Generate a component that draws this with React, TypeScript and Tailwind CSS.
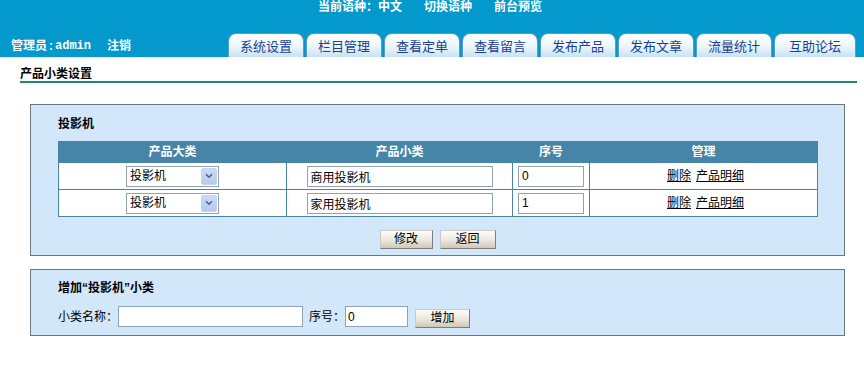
import { useState } from 'react'

const tabs = ['系统设置', '栏目管理', '查看定单', '查看留言', '发布产品', '发布文章', '流量统计', '互助论坛']

const rows = [
  { big: '投影机', small: '商用投影机', order: '0' },
  { big: '投影机', small: '家用投影机', order: '1' },
]

const Btn = ({ label, w }: { label: string; w: string }) => (
  <button
    className={`${w} h-[19px] text-[12px] leading-[17px] text-black border border-[#7d7d7d] border-t-[#c9c9c9] border-l-[#c9c9c9] bg-linear-to-b from-[#fdfdfb] via-[#ece9e0] to-[#cfc8b6]`}
  >
    {label}
  </button>
)

const Select = ({ value }: { value: string }) => (
  <div className="inline-flex items-center w-[93px] h-[21px] border border-[#8fa3b5] bg-white align-middle">
    <select
      className="flex-1 min-w-0 h-full pl-[3px] text-[12px] leading-[19px] bg-white outline-none appearance-none"
      defaultValue={value}
    >
      <option>投影机</option>
      <option>显示器</option>
    </select>
    <span className="flex items-center justify-center w-[16px] h-[17px] mr-[1px] rounded-[2px] bg-linear-to-b from-[#cbdaf8] to-[#b4c9f2] border border-[#c3d3f3]">
      <svg width="8" height="6" viewBox="0 0 8 6">
        <path d="M1 1.2 L4 4.2 L7 1.2" fill="none" stroke="#4d6185" strokeWidth="1.6" />
      </svg>
    </span>
  </div>
)

export default function App() {
  const [name, setName] = useState('')
  const [order, setOrder] = useState('0')

  return (
    <div
      className="w-[864px] h-[390px] bg-white text-[12px] text-black"
      style={{ fontFamily: '"Liberation Sans", "Noto Sans CJK SC", sans-serif' }}
    >
      {/* top bar */}
      <div className="h-[57px] bg-[#0399cc] flex flex-col">
        <div className="h-[14px] flex justify-center items-center gap-[22px] pr-[4px] text-white font-bold leading-[14px]">
          <span>当前语种：中文</span>
          <span>切换语种</span>
          <span>前台预览</span>
        </div>
        <div className="flex items-end mt-auto">
          <div className="w-[228px] pl-[11px] pb-[4px] text-white font-bold leading-[14px] flex items-center">
            <span>管理员</span>
            <span className="mx-[2px]">:</span>
            <span className="font-mono text-[12px]">admin</span>
            <span className="ml-[16px]">注销</span>
          </div>
          <div className="flex gap-[2px]">
            {tabs.map((t, i) => (
              <div
                key={t}
                className={`${i === tabs.length - 1 ? 'w-[82px]' : 'w-[76px]'} h-[24px] pt-[2px] flex items-center justify-center rounded-t-[8px] border-x border-t border-[#5d9cc4] bg-linear-to-b from-white via-[#eef7fc] to-[#c7e3f4] text-[#1b3f8e] text-[13px]`}
              >
                {t}
              </div>
            ))}
          </div>
        </div>
      </div>

      {/* section title */}
      <div className="ml-[20px] mr-[7px] pt-[10px] leading-[14px] font-bold border-b-2 border-[#1f8a6c]">
        产品小类设置
      </div>

      {/* list panel */}
      <div className="ml-[30px] mt-[21px] w-[815px] h-[152px] border border-[#6c7682] bg-[#d3e7fa] pl-[27px] pt-[12px]">
        <div className="font-bold leading-[14px]">投影机</div>
        <table className="mt-[10px] w-[760px] border-separate border-spacing-[1px] bg-[#4685a8] text-center">
          <thead>
            <tr className="h-[20px] text-white font-bold">
              <th className="w-[227px] font-bold">产品大类</th>
              <th className="w-[225px] font-bold">产品小类</th>
              <th className="w-[76px] font-bold">序号</th>
              <th className="font-bold">管理</th>
            </tr>
          </thead>
          <tbody>
            {rows.map(r => (
              <tr key={r.small} className="h-[26px]">
                <td className="bg-white p-0">
                  <Select value={r.big} />
                </td>
                <td className="bg-white p-0">
                  <input
                    className="w-[186px] h-[21px] border border-[#8fa3b5] pl-[3px] text-[12px] align-middle outline-none"
                    defaultValue={r.small}
                  />
                </td>
                <td className="bg-white p-0">
                  <input
                    className="w-[66px] h-[21px] border border-[#8fa3b5] pl-[3px] text-[12px] align-middle outline-none"
                    defaultValue={r.order}
                  />
                </td>
                <td className="bg-white p-0 pl-[4px]">
                  <a href="#" className="underline">删除</a>
                  <a href="#" className="underline ml-[5px]">产品明细</a>
                </td>
              </tr>
            ))}
          </tbody>
        </table>
        <div className="flex justify-center gap-[7px] mt-[13px] pr-[27px]">
          <Btn label="修改" w="w-[53px]" />
          <Btn label="返回" w="w-[56px]" />
        </div>
      </div>

      {/* add panel */}
      <div className="ml-[30px] mt-[13px] w-[815px] h-[67px] border border-[#6c7682] bg-[#d3e7fa] pl-[27px] pt-[11px]">
        <div className="font-bold leading-[14px]">增加“投影机”小类</div>
        <div className="flex items-center mt-[11px] h-[21px]">
          <span>小类名称：</span>
          <input
            className="w-[185px] h-[21px] border border-[#8fa3b5] bg-white pl-[3px] text-[12px] outline-none"
            value={name}
            onChange={e => setName(e.target.value)}
          />
          <span className="ml-[6px]">序号：</span>
          <input
            className="w-[63px] h-[21px] border border-[#8fa3b5] bg-white pl-[2px] text-[12px] outline-none"
            value={order}
            onChange={e => setOrder(e.target.value)}
          />
          <span className="ml-[7px] mt-[3px] flex">
            <Btn label="增加" w="w-[55px]" />
          </span>
        </div>
      </div>
    </div>
  )
}
